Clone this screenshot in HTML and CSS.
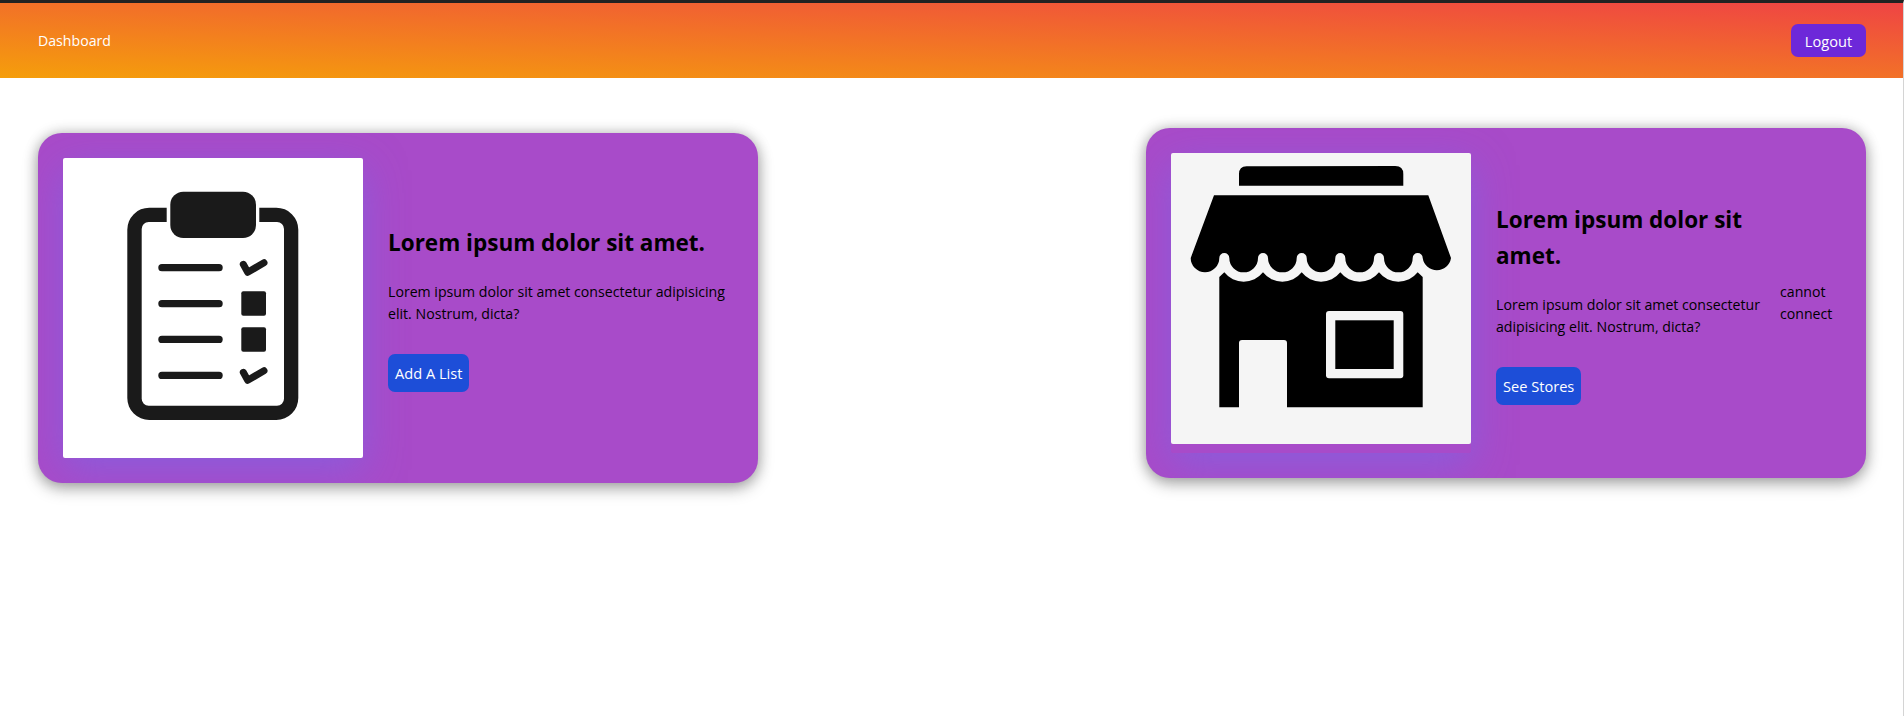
FILE: index.html
```html
<!DOCTYPE html>
<html lang="en">
<head>
  <meta charset="UTF-8">
  <title>Dashboard</title>
  <meta name="viewport" content="width=device-width, initial-scale=1.0">
  <link rel="stylesheet" href="styles.css">
</head>
<body>
  <nav class="navbar">
    <a class="nav-link" href="#">Dashboard</a>
    <button class="logout" type="button">Logout</button>
  </nav>

  <main class="cards">
    <section class="card card-lists">
      <figure class="card-figure figure-white">
        <svg class="card-image" viewBox="0 0 300 300" fill="#1a1a1a">
          <path d="M103.7 49.7H86.3a22 22 0 0 0-22 22V240a22 22 0 0 0 22 22H213.3a22 22 0 0 0 22-22V71.7a22 22 0 0 0-22-22H196.3V64H214a7 7 0 0 1 7 7V240.7a7 7 0 0 1-7 7H85.7a7 7 0 0 1-7-7V71a7 7 0 0 1 7-7H103.7Z"/>
          <rect x="107.3" y="33.7" width="85.7" height="46.3" rx="13"/>
          <rect x="95.3" y="106" width="64.4" height="7.3" rx="3.6"/>
          <rect x="95.3" y="142" width="64.4" height="7.3" rx="3.6"/>
          <rect x="95.3" y="177.7" width="64.4" height="7.3" rx="3.6"/>
          <rect x="95.3" y="213.7" width="64.4" height="7.3" rx="3.6"/>
          <rect x="178.3" y="133.3" width="24.7" height="24.4" rx="2"/>
          <rect x="178.3" y="169.3" width="24.7" height="24.4" rx="2"/>
          <path d="M180.3 106.3L184.7 114.3L201 104.7M180.3 214.3L184.7 222.3L201 212.7" fill="none" stroke="#1a1a1a" stroke-width="7" stroke-linecap="round" stroke-linejoin="round"/>
        </svg>
      </figure>
      <div class="card-body">
        <div class="card-text">
          <h2>Lorem ipsum dolor sit amet.</h2>
          <p>Lorem ipsum dolor sit amet consectetur adipisicing elit. Nostrum, dicta?</p>
          <button class="card-btn" type="button">Add A List</button>
        </div>
      </div>
    </section>

    <section class="card card-stores">
      <figure class="card-figure">
        <svg class="card-image image-store" viewBox="0 0 300 291" fill="#000">
          <path d="M68 32.7V21Q68 13 76 13.2L224.3 13Q232.3 13 232.3 21V32.7Z"/>
          <path d="M43 42.3H257.3L280 105A14.3 14.3 0 0 1 251.7 105A5 5 0 0 0 241.7 105A14.3 14.3 0 0 1 213 105A5 5 0 0 0 203 105A14.3 14.3 0 0 1 174.3 105A5 5 0 0 0 164.3 105A14.3 14.3 0 0 1 135.7 105A5 5 0 0 0 125.7 105A14.3 14.3 0 0 1 97 105A5 5 0 0 0 87 105A14.3 14.3 0 0 1 58.3 105A5 5 0 0 0 48.3 105A14.3 14.3 0 0 1 19.7 105Z"/>
          <path d="M48.3 254.3V124L53.3 119.3A24.6 24.6 0 0 0 92 119.3A24.6 24.6 0 0 0 130.7 119.3A24.6 24.6 0 0 0 169.3 119.3A24.6 24.6 0 0 0 208 119.3A24.6 24.6 0 0 0 246.7 119.3L251.7 124V254.3H116V190a3 3 0 0 0-3-3H71a3 3 0 0 0-3 3V254.3Z"/>
          <rect x="155" y="158" width="77.3" height="67.3" rx="3" fill="#f5f5f5"/>
          <rect x="164.3" y="167.3" width="58.4" height="48.7"/>
        </svg>
      </figure>
      <div class="card-body">
        <div class="card-text">
          <h2>Lorem ipsum dolor sit amet.</h2>
          <p>Lorem ipsum dolor sit amet consectetur adipisicing elit. Nostrum, dicta?</p>
          <button class="card-btn" type="button">See Stores</button>
        </div>
        <span class="card-status">cannot connect</span>
      </div>
    </section>
  </main>
</body>
</html>
```

FILE: styles.css
```css
* {
  box-sizing: border-box;
}
html, body {
  height: 100%;
}
body {
  margin: 0;
  background-color: #fff;
  border-top: 3px solid #222;
  border-right: 1px solid #d4d4d4;
  font-family: "Open Sans", sans-serif;
  font-size: 14.15px;
  line-height: 22.5px;
  overflow: hidden;
}
.navbar {
  display: flex;
  align-items: center;
  justify-content: space-between;
  height: 75px;
  padding: 0 37px 0 38px;
  background-image: linear-gradient(to top right, #f59e0b, #ef4444);
}
.nav-link {
  padding-top: 2px;
  color: #fff;
  text-decoration: none;
}
.logout {
  width: 75px;
  height: 33px;
  padding: 1px 0 0;
  border: 0;
  border-radius: 7px;
  background-color: #6d28d9;
  color: #fff;
  font: inherit;
  font-size: 14.6px;
}
.cards {
  display: flex;
  align-items: flex-start;
  justify-content: space-between;
  padding: 50px 37px 0 38px;
}
.card {
  display: flex;
  width: 720px;
  height: 350px;
  padding: 25px;
  gap: 25px;
  border-radius: 24px;
  background-color: #a84bc9;
  box-shadow: 0 6px 16px rgba(0, 0, 0, 0.28), 0 0 14px rgba(0, 0, 0, 0.22);
  overflow: hidden;
}
.card-lists {
  margin-top: 5px;
}
.card-figure {
  flex: none;
  width: 300px;
  height: 300px;
  margin: 0;
  border-radius: 2px;
  box-shadow: 0 12px 40px rgba(110, 110, 240, 0.5);
}
.card-image {
  display: block;
  width: 300px;
  height: 300px;
  border-radius: 2px;
}
.figure-white .card-image {
  background-color: #fff;
}
.image-store {
  height: 291px;
  background-color: #f5f5f5;
}
.card-body {
  display: flex;
  flex: 1;
  align-items: center;
  gap: 20px;
}
.card-text {
  flex: 1;
}
.card-text h2 {
  margin: 0 0 20px;
  font-size: 22.5px;
  line-height: 36px;
  font-weight: 700;
}
.card-text p {
  margin: 0 0 28px;
}
.card-btn {
  height: 38px;
  padding: 1px 7px 0;
  border: 0;
  border-radius: 7px;
  background-color: #1d4ed8;
  color: #fff;
  font: inherit;
  font-size: 14.6px;
}
.card-status {
  flex: none;
  width: 61px;
}
```
